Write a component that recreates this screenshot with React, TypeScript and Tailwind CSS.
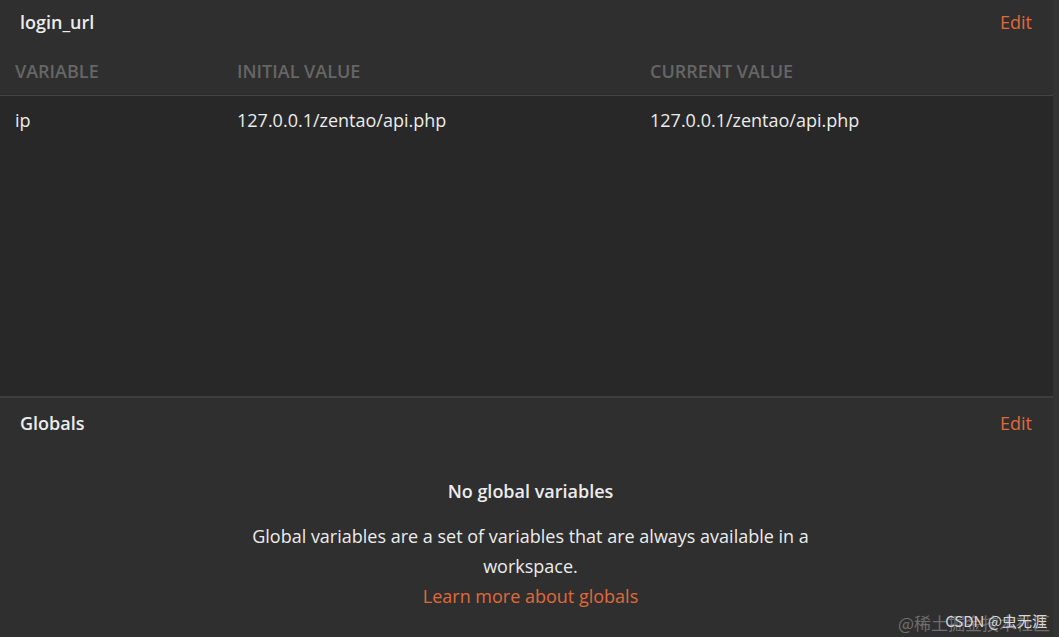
export default function App() {
  const rows = [{ key: "ip", initial: "127.0.0.1/zentao/api.php", current: "127.0.0.1/zentao/api.php" }];

  return (
    <div
      className="relative w-[1059px] h-[637px] overflow-hidden bg-[#2f2f2f] text-[#ececec] flex"
      style={{ fontFamily: '"Open Sans", "Noto Sans", sans-serif' }}
    >
      <div className="w-[1053px] flex flex-col">
        {/* environment */}
        <div className="h-[396px] flex flex-col">
          <div className="h-[45px] flex items-center justify-between pl-[20px] pr-[21px]">
            <h2 className="text-[18px] font-semibold">login_url</h2>
            <button className="text-[18px] text-[#e0693c]">Edit</button>
          </div>
          <div className="h-[50px] grid grid-cols-[222px_413px_1fr] items-center pl-[15px] pt-[2px] text-[18px] font-semibold text-[#666666] uppercase">
            <span>Variable</span>
            <span>Initial Value</span>
            <span>Current Value</span>
          </div>
          <div className="flex-1 bg-[#282828] border-t border-[#444444]">
            {rows.map((r) => (
              <div key={r.key} className="h-[48px] grid grid-cols-[222px_413px_1fr] items-center pl-[15px] text-[18px]">
                <span>{r.key}</span>
                <span>{r.initial}</span>
                <span>{r.current}</span>
              </div>
            ))}
          </div>
        </div>
        <div className="h-[2px] bg-[#3e3e3e]" />
        {/* globals */}
        <div className="flex-1 flex flex-col">
          <div className="h-[50px] flex items-center justify-between pl-[20px] pr-[21px]">
            <h2 className="text-[18px] font-semibold">Globals</h2>
            <button className="text-[18px] text-[#e0693c]">Edit</button>
          </div>
          <div className="flex flex-col items-center text-center pt-[28px] pl-[8px]">
            <p className="text-[18px] leading-[30px] font-semibold">No global variables</p>
            <p className="mt-[15px] w-[600px] text-[18px] leading-[30px]">
              Global variables are a set of variables that are always available in a workspace.
            </p>
            <a className="text-[18px] leading-[30px] text-[#e0693c]">Learn more about globals</a>
          </div>
        </div>
      </div>
      <div className="w-[6px] bg-[#333333]" />

      {/* watermark */}
      <div className="absolute right-[9px] bottom-[2px] text-[17px] text-[#8a8a8a] opacity-70 whitespace-nowrap" style={{ fontFamily: '"Noto Sans CJK SC", sans-serif' }}>
        @稀土掘金技术社区
      </div>
      <div className="absolute right-[12px] bottom-[5px] text-[15px] text-[#d8d8d8] whitespace-nowrap" style={{ fontFamily: '"Noto Sans CJK SC", sans-serif' }}>
        CSDN @虫无涯
      </div>
    </div>
  );
}
